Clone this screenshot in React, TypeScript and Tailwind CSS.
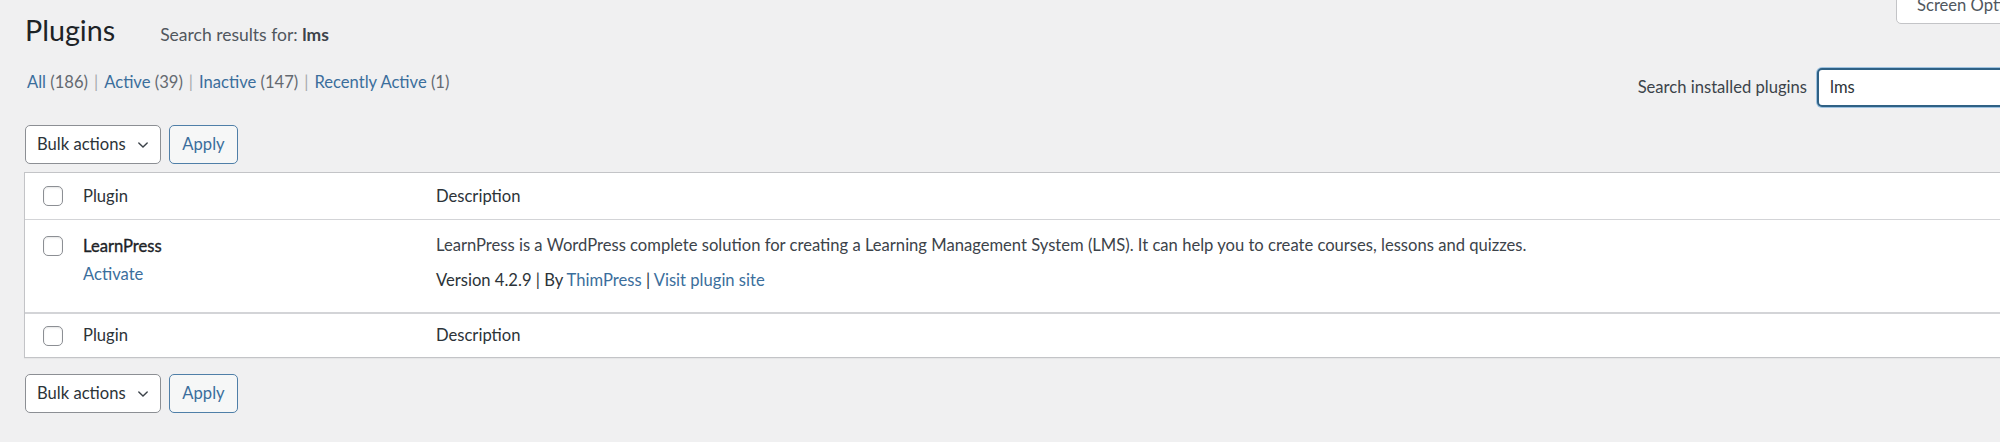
import React from "react";

const link = "text-[#3b6e9c]";

const Checkbox: React.FC = () => (
  <span className="block size-[20px] rounded-[5px] border border-[#8c8f94] bg-white shadow-[inset_0_1px_2px_rgba(0,0,0,0.1)]" />
);

const Chevron: React.FC = () => (
  <svg width="14" height="14" viewBox="0 0 20 20" fill="none" stroke="#3c434a" strokeWidth="2" strokeLinecap="round">
    <path d="M4 7l6 6 6-6" />
  </svg>
);

const BulkActions: React.FC = () => (
  <div className="flex items-center gap-[8px]">
    <div className="flex h-[39px] w-[136px] items-center justify-between rounded-[5px] border border-[#8c8f94] bg-white pl-[11px] pr-[10px] text-[16.6px] text-[#2c3338]">
      <span>Bulk actions</span>
      <Chevron />
    </div>
    <button className="flex h-[39px] w-[69px] items-center justify-center rounded-[5px] border border-[#4f7fa8] bg-[#f6f7f7] text-[16.6px] text-[#3b6e9c]">
      Apply
    </button>
  </div>
);

const HeadRow: React.FC<{ bottom?: boolean }> = ({ bottom }) => (
  <div
    className={
      "flex items-center text-[16.6px] text-[#2c3338] " +
      (bottom ? "h-[44px] border-t border-[#d3d4d7]" : "h-[47px] border-b border-[#d3d4d7]")
    }
  >
    <div className="w-[58px] pl-[18px]">
      <Checkbox />
    </div>
    <div className="w-[353px]">Plugin</div>
    <div>Description</div>
  </div>
);

export default function App() {
  return (
    <div className="relative h-[442px] w-[2000px] overflow-hidden bg-[#f0f0f1] font-['Lato',sans-serif] text-[#3c434a]">
      {/* screen options tab hangs off the top edge */}
      <div className="absolute left-[1896px] top-[-14px] flex h-[38px] items-center gap-[8px] whitespace-nowrap rounded-b-[5px] border border-[#c3c4c7] bg-white px-[20px] text-[16.6px] text-[#50575e]">
        Screen Options
        <Chevron />
      </div>

      <div className="ml-[25px] w-[2075px] pt-[12px]">
        <div className="flex items-baseline">
          <h1 className="text-[28.7px] leading-[37px] text-[#1d2327]">Plugins</h1>
          <span className="ml-[45px] text-[17.5px] text-[#50575e]">
            Search results for: <strong className="font-bold text-[#3c434a]">lms</strong>
          </span>
        </div>

        <div className="mt-[19px] flex items-start justify-between">
          <ul className="mt-px flex pl-[2px] text-[16.6px] leading-[26px] text-[#646970]">
            <li>
              <span className={link}>All</span> (186)<span className="mx-[6px] text-[#a7aaad]">|</span>
            </li>
            <li>
              <span className={link}>Active</span> (39)<span className="mx-[6px] text-[#a7aaad]">|</span>
            </li>
            <li>
              <span className={link}>Inactive</span> (147)<span className="mx-[6px] text-[#a7aaad]">|</span>
            </li>
            <li>
              <span className={link}>Recently Active</span> (1)
            </li>
          </ul>
          <div className="flex items-center">
            <label className="mr-[10px] text-[16.6px] text-[#3c434a]">Search installed plugins</label>
            <div className="flex h-[39px] w-[283px] items-center rounded-[5px] border-2 border-[#2f6185] bg-white pl-[11px] text-[16.6px] text-[#2c3338] shadow-[0_0_0_1px_#9ec2e0]">
              lms
            </div>
          </div>
        </div>

        <div className="mt-[18px]">
          <BulkActions />
        </div>

        <div className="-ml-px mt-[8px] border border-[#c3c4c7] bg-white shadow-[0_1px_1px_rgba(0,0,0,0.04)]">
          <HeadRow />
          <div className="flex h-[93px] items-start border-b border-[#d3d4d7] text-[16.6px]">
            <div className="w-[58px] pl-[18px] pt-[16px]">
              <Checkbox />
            </div>
            <div className="w-[353px] pt-[15px] leading-[22px]">
              <div className="text-[#1d2327] [-webkit-text-stroke:0.35px_#1d2327]">LearnPress</div>
              <div className={"mt-[6px] " + link}>Activate</div>
            </div>
            <div className="pt-[14px] leading-[22px]">
              <p className="text-[#3c434a]">
                LearnPress is a WordPress complete solution for creating a Learning Management System (LMS). It can help you to create courses, lessons and quizzes.
              </p>
              <p className="mt-[13px] text-[#2c3338]">
                Version 4.2.9 | By <span className={link}>ThimPress</span> | <span className={link}>Visit plugin site</span>
              </p>
            </div>
          </div>
          <HeadRow bottom />
        </div>

        <div className="mt-[16px]">
          <BulkActions />
        </div>
      </div>
    </div>
  );
}
